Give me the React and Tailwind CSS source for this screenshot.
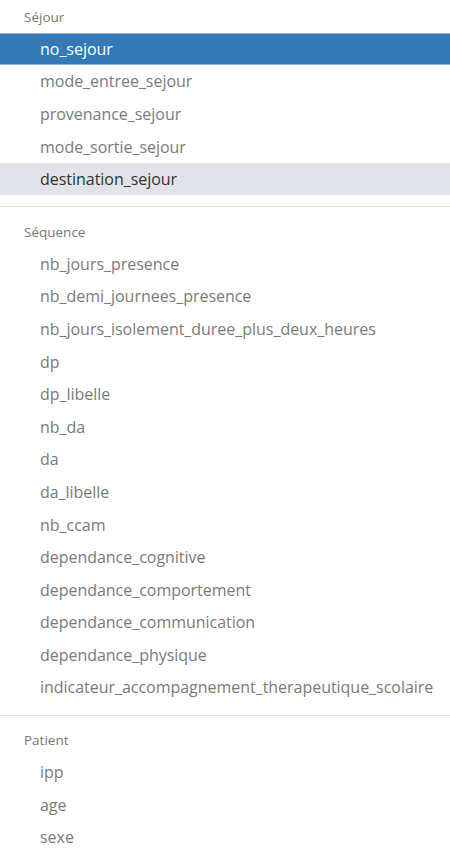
const groups = [
  {
    label: "Séjour",
    items: ["no_sejour", "mode_entree_sejour", "provenance_sejour", "mode_sortie_sejour", "destination_sejour"],
  },
  {
    label: "Séquence",
    items: [
      "nb_jours_presence",
      "nb_demi_journees_presence",
      "nb_jours_isolement_duree_plus_deux_heures",
      "dp",
      "dp_libelle",
      "nb_da",
      "da",
      "da_libelle",
      "nb_ccam",
      "dependance_cognitive",
      "dependance_comportement",
      "dependance_communication",
      "dependance_physique",
      "indicateur_accompagnement_therapeutique_scolaire",
    ],
  },
  {
    label: "Patient",
    items: ["ipp", "age", "sexe"],
  },
];

const selected = "no_sejour";
const hovered = "destination_sejour";

function Item({ name }) {
  const isSelected = name === selected;
  const isHovered = name === hovered;
  let cls = "text-[#7a7a7a]";
  if (isSelected) cls = "bg-[#337ab7] text-white border-y border-[#8fb3d6]";
  else if (isHovered) cls = "bg-[#e1e3e8] text-[#333]";
  return (
    <div className={`h-[32.6px] flex items-center pl-10 text-[16px] tracking-[-0.03px] whitespace-nowrap ${cls}`}>
      {name}
    </div>
  );
}

export default function App() {
  return (
    <div className="w-[450px] h-[852px] overflow-hidden bg-white pt-[1.5px]" style={{ fontFamily: "'Open Sans', 'Noto Sans', sans-serif" }}>
      {groups.map((g, i) => (
        <div key={g.label}>
          {i > 0 && <div className="h-px bg-[#e5e5e5] mt-[11px] mb-[9px]" />}
          <div className="h-[31px] flex items-center px-6 text-[13.5px] text-[#777]">{g.label}</div>
          {g.items.map((it) => (
            <Item key={it} name={it} />
          ))}
        </div>
      ))}
    </div>
  );
}
